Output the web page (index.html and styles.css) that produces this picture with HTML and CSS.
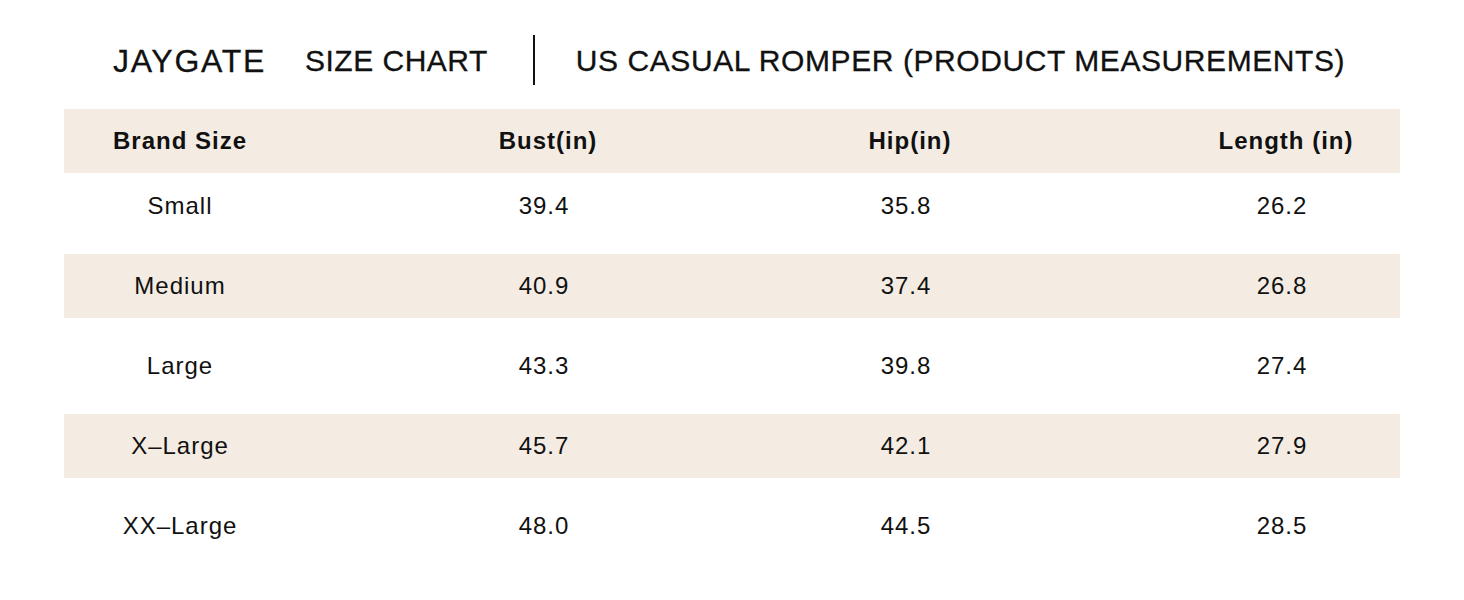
FILE: index.html
```html
<!DOCTYPE html>
<html lang="en">
<head>
<meta charset="utf-8">
<title>JAYGATE Size Chart</title>
<link rel="stylesheet" href="styles.css">
</head>
<body>
<div class="page">
  <div class="title-row">
    <span class="brand">JAYGATE</span>
    <span class="chart">SIZE CHART</span>
    <span class="divider"></span>
    <span class="product">US CASUAL ROMPER (PRODUCT MEASUREMENTS)</span>
  </div>
  <div class="table">
    <div class="row head band">
      <div class="cell">Brand Size</div>
      <div class="cell">Bust(in)</div>
      <div class="cell">Hip(in)</div>
      <div class="cell last">Length (in)</div>
    </div>
    <div class="body">
      <div class="row">
        <div class="cell">Small</div>
        <div class="cell">39.4</div>
        <div class="cell">35.8</div>
        <div class="cell last">26.2</div>
      </div>
      <div class="row band">
        <div class="cell">Medium</div>
        <div class="cell">40.9</div>
        <div class="cell">37.4</div>
        <div class="cell last">26.8</div>
      </div>
      <div class="row">
        <div class="cell">Large</div>
        <div class="cell">43.3</div>
        <div class="cell">39.8</div>
        <div class="cell last">27.4</div>
      </div>
      <div class="row band">
        <div class="cell">X–Large</div>
        <div class="cell">45.7</div>
        <div class="cell">42.1</div>
        <div class="cell last">27.9</div>
      </div>
      <div class="row">
        <div class="cell">XX–Large</div>
        <div class="cell">48.0</div>
        <div class="cell">44.5</div>
        <div class="cell last">28.5</div>
      </div>
    </div>
  </div>
</div>
</body>
</html>
```

FILE: styles.css
```css
* { box-sizing: border-box; }
html, body { margin: 0; padding: 0; background: #ffffff; }
body {
  font-family: "Liberation Sans", Arial, sans-serif;
  color: #111111;
}
.page {
  padding: 35px 64px 0 64px;
  width: 1464px;
}
.title-row {
  display: flex;
  align-items: center;
  height: 50px;
  padding-left: 49px;
  line-height: 50px;
}
.brand, .chart, .product {
  padding-top: 2px;
  -webkit-text-stroke: 0.3px #111111;
}
.brand {
  font-size: 32px;
  letter-spacing: 1.7px;
}
.chart {
  font-size: 30px;
  letter-spacing: 0.5px;
  margin-left: 39px;
}
.divider {
  width: 2px;
  height: 50px;
  background: #111111;
  margin-left: 45px;
}
.product {
  font-size: 30px;
  letter-spacing: 0.58px;
  margin-left: 41px;
}
.table {
  margin-top: 24px;
  width: 1336px;
}
.body {
  display: flex;
  flex-direction: column;
  gap: 16px;
  padding-top: 1px;
}
.row {
  display: grid;
  grid-template-columns: 232px 496px 228px 1fr;
  height: 64px;
  line-height: 64px;
  font-size: 24px;
  letter-spacing: 1px;
}
.band { background: #f4ece3; }
.cell { text-align: center; white-space: nowrap; }
.cell.last { justify-self: end; width: 236px; }
.head .cell { font-weight: bold; }
.head .cell + .cell { padding-left: 8px; }
```
